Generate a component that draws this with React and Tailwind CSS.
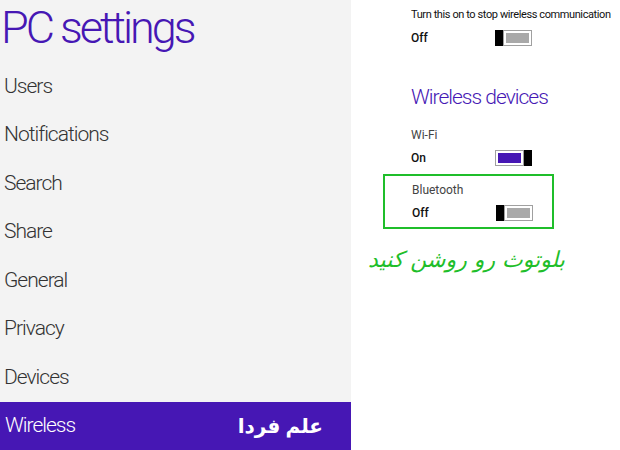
export default function App() {
  const items = ['Users', 'Notifications', 'Search', 'Share', 'General', 'Privacy', 'Devices']

  const Toggle = ({ on }) => (
    <div className="flex h-[16px] w-[37px]">
      {!on && <div className="w-[8px] h-full bg-black" />}
      <div className="flex-1 h-full border border-[#a0a0a0] bg-white p-[2px]">
        <div className={on ? 'w-full h-full bg-[#4617b4]' : 'w-full h-full bg-[#a9a9a9]'} />
      </div>
      {on && <div className="w-[8px] h-full bg-black" />}
    </div>
  )

  return (
    <div className="w-[620px] h-[450px] flex bg-white overflow-hidden" style={{ fontFamily: 'Roboto, "Noto Sans", sans-serif' }}>

      {/* Left nav */}
      <div className="w-[351px] shrink-0 h-full bg-[#f3f3f3] flex flex-col">
        <h1 className="text-[45px] leading-[56px] font-light text-[#4617b4] pl-[1px] h-[62px] tracking-[-3px] whitespace-nowrap">PC settings</h1>
        {items.map((item) => (
          <div key={item} className="h-[48.5px] flex items-center pl-[4px] text-[21px] font-light text-[#333] tracking-[-1px]">
            {item}
          </div>
        ))}
        <div className="h-[48px] bg-[#4617b4] flex items-center justify-between pl-[5px] pr-[28px]">
          <span className="text-[21px] font-light text-white tracking-[-1px]">Wireless</span>
          <span className="text-[20px] font-bold text-white" style={{ fontFamily: '"Noto Sans", "DejaVu Sans", sans-serif' }} dir="rtl">علم فردا</span>
        </div>
      </div>

      {/* Right content */}
      <div className="flex-1 pl-[60px] pt-[7px] text-[#111]">
        <p className="text-[11px] leading-[16px] whitespace-nowrap tracking-[-0.4px]">Turn this on to stop wireless communication</p>
        <div className="flex items-center justify-between w-[121px] mt-[6px]">
          <span className="text-[12px] font-medium">Off</span>
          <Toggle on={false} />
        </div>

        <h2 className="text-[21px] font-light text-[#4617b4] mt-[40px] leading-none tracking-[-1px]">Wireless devices</h2>

        <p className="text-[12px] text-[#444] mt-[19px] leading-[16px]">Wi-Fi</p>
        <div className="flex items-center justify-between w-[121px] mt-[6px]">
          <span className="text-[12px] font-medium">On</span>
          <Toggle on />
        </div>

        <div className="ml-[-28px] mt-[7px] w-[171px] h-[55px] border-2 border-[#1fbe2a] pl-[27px] pt-[6px]">
          <p className="text-[12px] text-[#444] leading-[16px]">Bluetooth</p>
          <div className="flex items-center justify-between w-[121px] mt-[6px]">
            <span className="text-[12px] font-medium">Off</span>
            <Toggle on={false} />
          </div>
        </div>

        <p dir="rtl" className="ml-[-36px] mt-[20px] w-[190px] text-right text-[22px] italic text-[#1fbe2a] leading-none whitespace-nowrap" style={{ fontFamily: '"DejaVu Sans", "Noto Sans", sans-serif' }}>
          بلوتوث رو روشن کنید
        </p>
      </div>
    </div>
  )
}
